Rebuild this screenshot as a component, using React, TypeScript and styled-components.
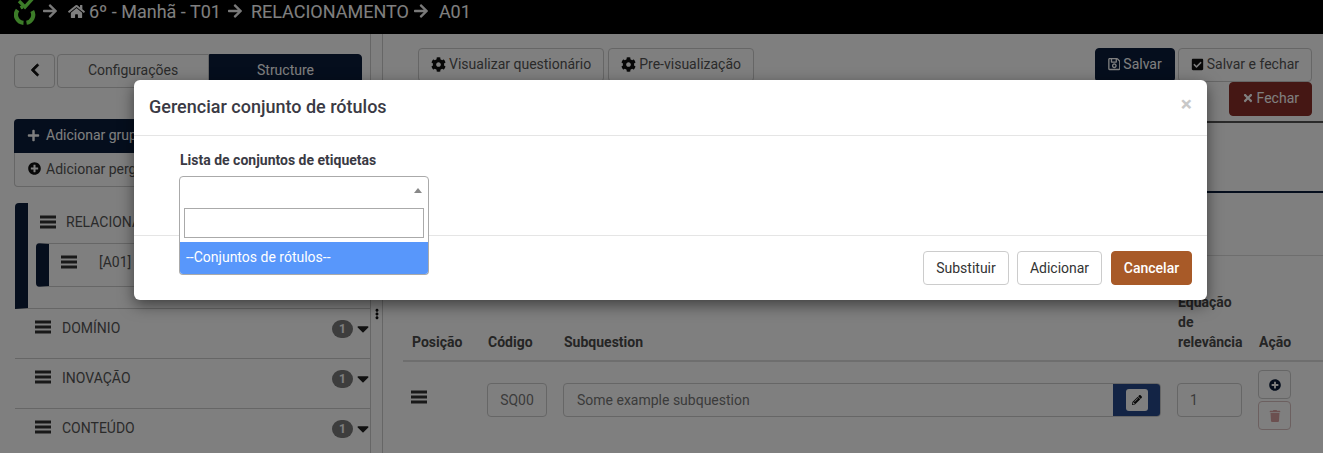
import React from "react";
import styled, { createGlobalStyle } from "styled-components";
import {
  FaArrowRight, FaHome, FaCog, FaRegSave, FaCheckSquare, FaTimes, FaPlus, FaPlusCircle,
  FaCaretDown, FaPencilAlt, FaTrash, FaChevronLeft, FaEllipsisV,
} from "react-icons/fa";

const Global = createGlobalStyle`
  html, body { margin: 0; padding: 0; background: #fff; }
  * { box-sizing: border-box; }
  body { font-family: Roboto, "Liberation Sans", sans-serif; font-size: 14px; color: #555; }
`;

const Page = styled.div`
  position: relative;
  width: 1323px;
  height: 453px;
  overflow: hidden;
  background: #fff;
`;

const TopBar = styled.header`
  height: 34px;
  background: #000;
  color: #fff;
  display: flex;
  align-items: flex-start;
  padding: 1px 0 0 14px;
  font-size: 18px;
  line-height: 21px;
`;
const Crumb = styled.span<{ $gap?: number }>`
  display: inline-flex;
  align-items: center;
  margin-left: ${(p) => p.$gap ?? 0}px;
  white-space: nowrap;
`;
const CrumbArrow = styled(FaArrowRight)`
  width: 16px;
  height: 16px;
  margin-top: 2px;
  color: #f2f2f2;
`;
const HomeIcon = styled(FaHome)`
  width: 17px;
  height: 15px;
  margin-right: 4px;
`;

const Layout = styled.div`
  display: grid;
  grid-template-columns: 383px 1fr;
  height: 419px;
`;

const Sidebar = styled.aside`
  position: relative;
  padding: 20px 0 0 14px;
  border-right: 1px solid #ccc;
`;
const Tabs = styled.div`
  display: flex;
  width: 348px;
  height: 34px;
`;
const BackBtn = styled.button`
  width: 41px;
  margin-right: 2px;
  background: #fff;
  border: 1px solid #ccc;
  border-radius: 4px;
  color: #111;
  padding: 0 0 2px;
  display: flex;
  align-items: center;
  justify-content: center;
  font-size: 14px;
  svg { stroke: #111; stroke-width: 30px; }
`;
const Tab = styled.div<{ $active?: boolean }>`
  width: ${(p) => (p.$active ? 153 : 152)}px;
  padding-bottom: 2px;
  display: flex;
  align-items: center;
  justify-content: center;
  font-size: 14px;
  color: ${(p) => (p.$active ? "#fff" : "#555")};
  background: ${(p) => (p.$active ? "#0a1c3a" : "#fff")};
  border: 1px solid ${(p) => (p.$active ? "#0a1c3a" : "#ccc")};
  border-radius: ${(p) => (p.$active ? "0 4px 4px 0" : "4px 0 0 4px")};
`;
const AddGroup = styled.div`
  margin-top: 31px;
  width: 356px;
  height: 34px;
  padding: 0 13px 2px;
  display: flex;
  align-items: center;
  gap: 6px;
  background: #0a1c3a;
  color: #fff;
  border-radius: 4px 4px 0 0;
`;
const AddQuestion = styled.div`
  width: 356px;
  height: 34px;
  padding: 0 13px 2px;
  display: flex;
  align-items: center;
  gap: 5px;
  background: #fff;
  border: 1px solid #ccc;
  border-top: 0;
  border-radius: 0 0 4px 4px;
  color: #555;
`;
const Accordion = styled.div`
  margin: 16px 0 0 1px;
  width: 355px;
`;
const GroupOpen = styled.div`
  height: 106px;
  border-left: 13px solid #0a1c3a;
  border-radius: 4px 0 0 0;
  padding-top: 11px;
  border-bottom: 1px solid #ccc;
`;
const GroupHead = styled.div`
  display: flex;
  align-items: center;
  gap: 10px;
  padding-left: 12px;
  height: 16px;
`;
const Icon = styled.svg`
  width: 16px;
  height: 14px;
  flex: none;
  fill: #333;
`;
const QuestionItem = styled.div`
  margin: 13px 0 0 8px;
  height: 44px;
  border-left: 13px solid #0a1c3a;
  border-bottom: 1px solid #ccc;
  border-top: 1px solid #ccc;
  border-radius: 4px;
  padding: 0 0 6px 12px;
  display: flex;
  align-items: center;
  gap: 22px;
`;
const GroupRow = styled.div`
  height: 50px;
  border-bottom: 1px solid #ccc;
  display: flex;
  align-items: flex-start;
  padding: 11px 1px 0 20px;
  gap: 11px;
`;
const RowName = styled.span`
  flex: 1;
  line-height: 16px;
`;
const Badge = styled.span`
  width: 21px;
  height: 18px;
  border-radius: 9px;
  background: #7a7a7a;
  color: #fff;
  font-size: 12px;
  font-weight: 700;
  display: flex;
  align-items: center;
  justify-content: center;
`;
const Caret = styled(FaCaretDown)`
  width: 12px;
  height: 19px;
  color: #222;
  margin: -1px 0 0 -7px;
`;
const SplitDots = styled(FaEllipsisV)`
  position: absolute;
  left: 375px;
  top: 274px;
  width: 4px;
  height: 12px;
  color: #111;
`;
const SplitStrip = styled.div`
  position: absolute;
  top: 0;
  bottom: 0;
  left: 370px;
  width: 1px;
  background: #ccc;
`;

const Main = styled.main`
  padding: 14px 0 0 0;
  min-width: 0;
`;
const Toolbar = styled.div`
  display: flex;
  justify-content: space-between;
  padding: 0 11px 0 35px;
  height: 75px;
  border-bottom: 2px solid #555;
`;
const ToolGroup = styled.div`
  display: flex;
  gap: 3px;
  align-items: flex-start;
`;
const LeftTools = styled(ToolGroup)`
  gap: 4px;
`;
const ToolRight = styled.div`
  display: flex;
  flex-direction: column;
  align-items: flex-end;
`;
const ToolBtn = styled.div<{ $kind?: "primary" | "danger" }>`
  height: 34px;
  padding: 0 12px 2px;
  display: inline-flex;
  align-items: center;
  gap: 3px;
  border-radius: 4px;
  white-space: nowrap;
  border: 1px solid
    ${(p) => (p.$kind === "primary" ? "#0a1c3a" : p.$kind === "danger" ? "#8a2e28" : "#ccc")};
  background: ${(p) => (p.$kind === "primary" ? "#0a1c3a" : p.$kind === "danger" ? "#8a2e28" : "#fff")};
  color: ${(p) => (p.$kind ? "#fff" : "#555")};
`;
const SaveBtn = styled(ToolBtn)`
  width: 80px;
`;
const NavLine = styled.div`
  height: 70px;
  border-bottom: 2px solid #0a1c3a;
`;
const SectionLine = styled.div`
  height: 63px;
  border-bottom: 1px solid #ddd;
`;
const TableWrap = styled.div`
  padding: 36px 0 0 20px;
`;
const HeaderRow = styled.div`
  display: grid;
  grid-template-columns: 76px 76px 614px 81px 1fr;
  align-items: end;
  height: 70px;
  padding: 0 0 12px 9px;
  border-bottom: 2px solid #ddd;
  font-weight: 700;
  color: #4a4a4a;
  line-height: 20px;
`;
const BodyRow = styled.div`
  display: grid;
  grid-template-columns: 76px 76px 614px 81px 1fr;
  padding: 8px 0 0 8px;
  align-items: start;
`;
const HandleCell = styled.div`
  padding-top: 20px;
`;
const TextBox = styled.div<{ $w: number; $center?: boolean }>`
  width: ${(p) => p.$w}px;
  height: 34px;
  margin-top: 13px;
  border: 1px solid #ccc;
  border-radius: 4px;
  display: flex;
  align-items: center;
  justify-content: ${(p) => (p.$center ? "center" : "flex-start")};
  padding: 0 ${(p) => (p.$center ? 0 : 12)}px;
  color: #777;
`;
const InputGroup = styled.div`
  width: 598px;
  height: 34px;
  margin-top: 13px;
  border: 1px solid #ccc;
  border-radius: 4px;
  display: flex;
  overflow: hidden;
  color: #777;
`;
const InputText = styled.div`
  flex: 1;
  padding: 0 13px;
  line-height: 32px;
`;
const InputAddon = styled.div`
  width: 47px;
  background: #27498a;
  display: flex;
  align-items: center;
  justify-content: center;
`;
const PencilBtn = styled.div`
  width: 22px;
  height: 22px;
  border-radius: 3px;
  background: #fff;
  color: #111;
  display: flex;
  align-items: center;
  justify-content: center;
  font-size: 10px;
`;
const ActionCol = styled.div`
  display: flex;
  flex-direction: column;
  gap: 2px;
`;
const ActionBtn = styled.div<{ $danger?: boolean }>`
  width: 33px;
  height: 29px;
  border: 1px solid ${(p) => (p.$danger ? "#d8c0c0" : "#ccc")};
  border-radius: 4px;
  display: flex;
  align-items: center;
  justify-content: center;
  font-size: 12px;
  color: ${(p) => (p.$danger ? "#d9a0a0" : "#0a1c3a")};
`;

const Backdrop = styled.div`
  position: absolute;
  inset: 0;
  background: rgba(0, 0, 0, 0.5);
`;
const Modal = styled.div`
  position: absolute;
  left: 134px;
  top: 80px;
  width: 1073px;
  height: 220px;
  background: #fff;
  border-radius: 6px;
  box-shadow: 0 5px 15px rgba(0, 0, 0, 0.5);
  display: flex;
  flex-direction: column;
  color: #333;
`;
const ModalHead = styled.div`
  height: 56px;
  border-bottom: 1px solid #e5e5e5;
  padding: 0 15px 2px;
  display: flex;
  align-items: center;
  justify-content: space-between;
`;
const ModalTitle = styled.h4`
  margin: 0;
  font-size: 18px;
  font-weight: 500;
  color: #3a3a44;
`;
const CloseX = styled.span`
  font-size: 21px;
  font-weight: 700;
  line-height: 1;
  color: #c8c8c8;
  margin: -4px 0 0 0;
`;
const ModalBody = styled.div`
  position: relative;
  height: 100px;
  padding: 16px 0 0 46px;
  border-bottom: 1px solid #e5e5e5;
`;
const FieldLabel = styled.label`
  display: block;
  font-weight: 700;
  font-size: 14px;
  line-height: 16px;
  color: #3a3a44;
`;
const SelectBox = styled.div`
  margin: 8px 0 0 -1px;
  width: 250px;
  height: 29px;
  border: 1px solid #aaa;
  border-radius: 4px 4px 0 0;
  display: flex;
  align-items: center;
  justify-content: flex-end;
  padding-right: 6px;
`;
const SelectArrow = styled.span`
  width: 0;
  height: 0;
  border-left: 4px solid transparent;
  border-right: 4px solid transparent;
  border-bottom: 5px solid #888;
`;
const Dropdown = styled.div`
  position: absolute;
  left: 45px;
  top: 68px;
  width: 250px;
  height: 71px;
  background: #fff;
  border: 1px solid #aaa;
  border-top: 0;
  border-radius: 0 0 4px 4px;
  overflow: hidden;
  z-index: 2;
`;
const SearchBox = styled.div`
  margin: 4px;
  height: 30px;
  border: 1px solid #aaa;
`;
const Option = styled.div`
  background: #5897fb;
  color: #fff;
  height: 32px;
  line-height: 30px;
  padding-left: 6px;
  font-size: 14px;
`;
const ModalFoot = styled.div`
  flex: 1;
  display: flex;
  justify-content: flex-end;
  align-items: flex-start;
  padding: 15px 15px 0 0;
  gap: 8px;
`;
const FootBtn = styled.div<{ $primary?: boolean; $w: number }>`
  width: ${(p) => p.$w}px;
  height: 34px;
  border-radius: 4px;
  display: flex;
  align-items: center;
  justify-content: center;
  border: 1px solid ${(p) => (p.$primary ? "#a85a28" : "#ccc")};
  background: ${(p) => (p.$primary ? "#a85a28" : "#fff")};
  color: ${(p) => (p.$primary ? "#fff" : "#333")};
  font-weight: ${(p) => (p.$primary ? 500 : 400)};
  margin-left: ${(p) => (p.$primary ? 1 : 0)}px;
`;

const Logo = () => (
  <svg width="22" height="25" viewBox="0 0 22 25" style={{ marginTop: -1, marginRight: 6, flex: "none" }}>
    <g fill="none" stroke="#78f850">
      <path d="M3.6 10 A8 8 0 0 0 9.5 22.8" strokeWidth="4.2" />
      <path d="M12.5 22.8 A8 8 0 0 0 18.2 11" strokeWidth="4.2" />
      <path d="M6.5 7.8 A8 8 0 0 1 9 7" strokeWidth="3.4" />
      <path d="M5 1 L11 7 L20 -3" strokeWidth="3.4" />
    </g>
  </svg>
);

const BarsIcon = () => (
  <Icon viewBox="0 0 16 14">
    <rect x="0" y="0.5" width="16" height="3" />
    <rect x="0" y="5.5" width="16" height="3" />
    <rect x="0" y="10.5" width="16" height="3" />
  </Icon>
);

const rows = ["DOMÍNIO", "INOVAÇÃO", "CONTEÚDO"];

export default function App() {
  return (
    <Page>
      <Global />
      <TopBar>
        <Logo />
        <CrumbArrow />
        <Crumb $gap={10}><HomeIcon />6º - Manhã - T01</Crumb>
        <Crumb $gap={6}><CrumbArrow /></Crumb>
        <Crumb $gap={8}>RELACIONAMENTO</Crumb>
        <Crumb $gap={4}><CrumbArrow /></Crumb>
        <Crumb $gap={10}>A01</Crumb>
      </TopBar>
      <Layout>
        <Sidebar>
          <Tabs>
            <BackBtn><FaChevronLeft /></BackBtn>
            <Tab>Configurações</Tab>
            <Tab $active>Structure</Tab>
          </Tabs>
          <AddGroup><FaPlus size={13} />Adicionar grupo</AddGroup>
          <AddQuestion><FaPlusCircle size={13} color="#111" />Adicionar pergunta</AddQuestion>
          <Accordion>
            <GroupOpen>
              <GroupHead><BarsIcon />RELACIONAMENTO</GroupHead>
              <QuestionItem><BarsIcon />[A01]</QuestionItem>
            </GroupOpen>
            {rows.map((r) => (
              <GroupRow key={r}>
                <BarsIcon />
                <RowName>{r}</RowName>
                <Badge>1</Badge>
                <Caret />
              </GroupRow>
            ))}
          </Accordion>
          <SplitStrip />
          <SplitDots />
        </Sidebar>
        <Main>
          <Toolbar>
            <LeftTools>
              <ToolBtn><FaCog size={15} color="#111" />Visualizar questionário</ToolBtn>
              <ToolBtn><FaCog size={15} color="#111" />Pre-visualização</ToolBtn>
            </LeftTools>
            <ToolRight>
              <ToolGroup>
                <SaveBtn $kind="primary"><FaRegSave size={14} />Salvar</SaveBtn>
                <ToolBtn><FaCheckSquare size={13} color="#111" />Salvar e fechar</ToolBtn>
              </ToolGroup>
              <ToolBtn $kind="danger"><FaTimes size={12} />Fechar</ToolBtn>
            </ToolRight>
          </Toolbar>
          <NavLine />
          <SectionLine />
          <TableWrap>
            <HeaderRow>
              <span>Posição</span>
              <span>Código</span>
              <span>Subquestion</span>
              <span>Equação<br />de<br />relevância</span>
              <span>Ação</span>
            </HeaderRow>
            <BodyRow>
              <HandleCell><BarsIcon /></HandleCell>
              <TextBox $w={60} $center>SQ00</TextBox>
              <InputGroup>
                <InputText>Some example subquestion</InputText>
                <InputAddon><PencilBtn><FaPencilAlt /></PencilBtn></InputAddon>
              </InputGroup>
              <TextBox $w={65}>1</TextBox>
              <ActionCol>
                <ActionBtn><FaPlusCircle /></ActionBtn>
                <ActionBtn $danger><FaTrash /></ActionBtn>
              </ActionCol>
            </BodyRow>
          </TableWrap>
        </Main>
      </Layout>
      <Backdrop />
      <Modal>
        <ModalHead>
          <ModalTitle>Gerenciar conjunto de rótulos</ModalTitle>
          <CloseX>×</CloseX>
        </ModalHead>
        <ModalBody>
          <FieldLabel>Lista de conjuntos de etiquetas</FieldLabel>
          <SelectBox><SelectArrow /></SelectBox>
          <Dropdown>
            <SearchBox />
            <Option>--Conjuntos de rótulos--</Option>
          </Dropdown>
        </ModalBody>
        <ModalFoot>
          <FootBtn $w={86}>Substituir</FootBtn>
          <FootBtn $w={85}>Adicionar</FootBtn>
          <FootBtn $w={81} $primary>Cancelar</FootBtn>
        </ModalFoot>
      </Modal>
    </Page>
  );
}
